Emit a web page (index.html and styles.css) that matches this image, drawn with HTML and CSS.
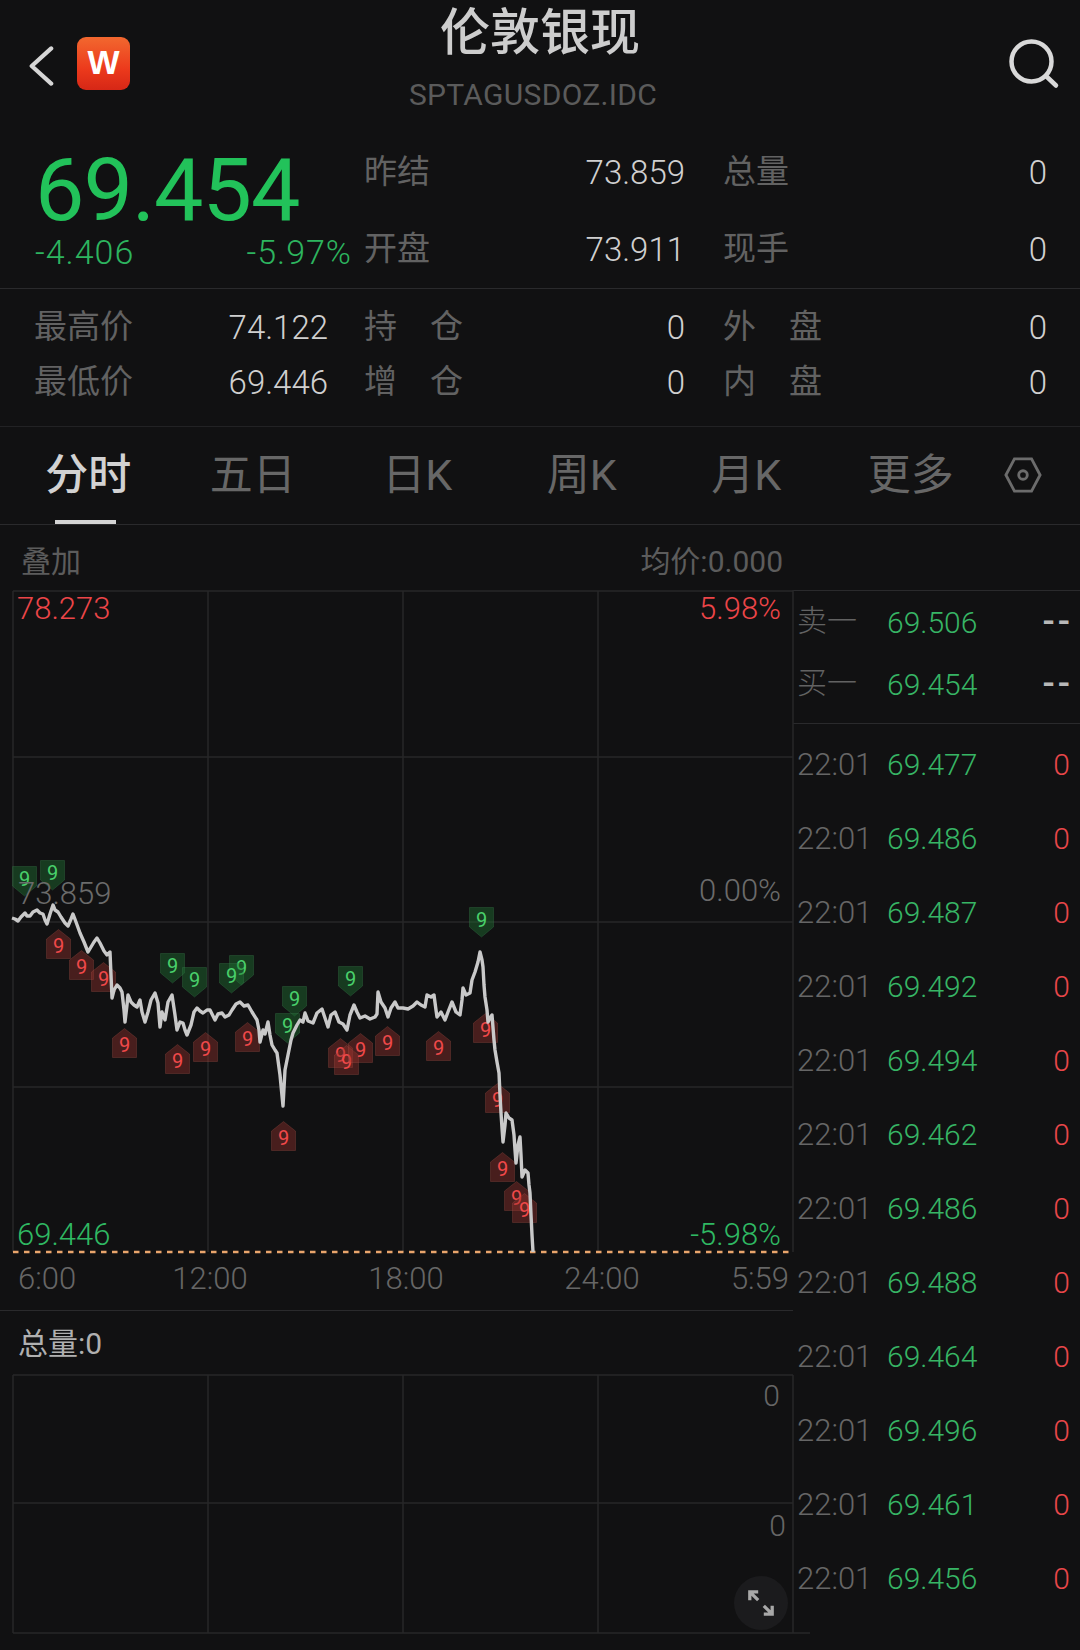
FILE: index.html
```html
<!DOCTYPE html>
<html lang="zh-CN">
<head>
<meta charset="utf-8">
<title>伦敦银现</title>
<link rel="stylesheet" href="styles.css">
</head>
<body>
<div class="page">
  <header class="topbar">
    <div class="topbar-left">
      <svg class="back" viewBox="0 0 28 44"><path d="M25 3L4 22L25 41"/></svg>
      <div class="logo">W</div>
    </div>
    <div class="title-block">
      <div class="title">伦敦银现</div>
      <div class="code">SPTAGUSDOZ.IDC</div>
    </div>
    <svg class="search" viewBox="0 0 52 52"><circle cx="23.5" cy="23.5" r="20"/><path d="M38 38L48 47.5"/></svg>
  </header>

  <section class="quote-top">
    <div class="price-block">
      <div class="price">69.454</div>
      <div class="change"><span>-4.406</span><span>-5.97%</span></div>
    </div>
    <div class="stats stats-top">
      <div class="stat"><span class="lbl">昨结</span><span class="val">73.859</span></div>
      <div class="stat stat-r"><span class="lbl">总量</span><span class="val">0</span></div>
      <div class="stat"><span class="lbl">开盘</span><span class="val">73.911</span></div>
      <div class="stat stat-r"><span class="lbl">现手</span><span class="val">0</span></div>
    </div>
  </section>

  <section class="quote-low">
    <div class="stat stat-l"><span class="lbl">最高价</span><span class="val">74.122</span></div>
    <div class="stat"><span class="lbl">持　仓</span><span class="val">0</span></div>
    <div class="stat stat-r"><span class="lbl">外　盘</span><span class="val">0</span></div>
    <div class="stat stat-l"><span class="lbl">最低价</span><span class="val">69.446</span></div>
    <div class="stat"><span class="lbl">增　仓</span><span class="val">0</span></div>
    <div class="stat stat-r"><span class="lbl">内　盘</span><span class="val">0</span></div>
  </section>

  <nav class="tabs">
    <div class="tab tab-on">分时</div>
    <div class="tab">五日</div>
    <div class="tab">日K</div>
    <div class="tab">周K</div>
    <div class="tab">月K</div>
    <div class="tab">更多</div>
    <svg class="hex" viewBox="0 0 40 40"><path d="M11 3H29L38 20L29 37H11L2 20Z"/><circle cx="20" cy="20" r="4.5"/></svg>
  </nav>

  <div class="chart-head"><span>叠加</span><span>均价:0.000</span></div>

  <div class="board">
    <div class="charts">
      <div class="main-chart">
        <svg class="plot" viewBox="0 590 793 664">
          <defs>
            <path id="mk-down" d="M0.5 0.5H24.5V20L12.5 30L0.5 20Z"/>
            <path id="mk-up" d="M12.5 0.5L24.5 10V29.5H0.5V10Z"/>
          </defs>
          <g class="grid">
            <path d="M13 591H793M13 757H793M13 922H793M13 1087H793"/>
            <path d="M13 591V1252M208 591V1252M403 591V1252M598 591V1252M793 590V1252"/>
          </g>
          <path class="base" d="M13 1252H793"/>

          <g class="mk mk-g">
            <g transform="translate(12,866)"><use href="#mk-down"/><text x="12.5" y="20">9</text></g>
            <g transform="translate(40,860)"><use href="#mk-down"/><text x="12.5" y="20">9</text></g>
            <g transform="translate(160,953)"><use href="#mk-down"/><text x="12.5" y="20">9</text></g>
            <g transform="translate(182,967)"><use href="#mk-down"/><text x="12.5" y="20">9</text></g>
            <g transform="translate(229,955)"><use href="#mk-down"/><text x="12.5" y="20">9</text></g>
            <g transform="translate(219,963)"><use href="#mk-down"/><text x="12.5" y="20">9</text></g>
            <g transform="translate(282,986)"><use href="#mk-down"/><text x="12.5" y="20">9</text></g>
            <g transform="translate(275,1013)"><use href="#mk-down"/><text x="12.5" y="20">9</text></g>
            <g transform="translate(338,966)"><use href="#mk-down"/><text x="12.5" y="20">9</text></g>
            <g transform="translate(469,907)"><use href="#mk-down"/><text x="12.5" y="20">9</text></g>
          </g>
          <g class="mk mk-r">
            <g transform="translate(46,929)"><use href="#mk-up"/><text x="12.5" y="24">9</text></g>
            <g transform="translate(69,950)"><use href="#mk-up"/><text x="12.5" y="24">9</text></g>
            <g transform="translate(91,962)"><use href="#mk-up"/><text x="12.5" y="24">9</text></g>
            <g transform="translate(112,1028)"><use href="#mk-up"/><text x="12.5" y="24">9</text></g>
            <g transform="translate(165,1044)"><use href="#mk-up"/><text x="12.5" y="24">9</text></g>
            <g transform="translate(193,1032)"><use href="#mk-up"/><text x="12.5" y="24">9</text></g>
            <g transform="translate(235,1022)"><use href="#mk-up"/><text x="12.5" y="24">9</text></g>
            <g transform="translate(271,1121)"><use href="#mk-up"/><text x="12.5" y="24">9</text></g>
            <g transform="translate(328,1038)"><use href="#mk-up"/><text x="12.5" y="24">9</text></g>
            <g transform="translate(334,1045)"><use href="#mk-up"/><text x="12.5" y="24">9</text></g>
            <g transform="translate(348,1033)"><use href="#mk-up"/><text x="12.5" y="24">9</text></g>
            <g transform="translate(375,1026)"><use href="#mk-up"/><text x="12.5" y="24">9</text></g>
            <g transform="translate(426,1031)"><use href="#mk-up"/><text x="12.5" y="24">9</text></g>
            <g transform="translate(473,1013)"><use href="#mk-up"/><text x="12.5" y="24">9</text></g>
            <g transform="translate(485,1083)"><use href="#mk-up"/><text x="12.5" y="24">9</text></g>
            <g transform="translate(490,1152)"><use href="#mk-up"/><text x="12.5" y="24">9</text></g>
            <g transform="translate(504,1181)"><use href="#mk-up"/><text x="12.5" y="24">9</text></g>
            <g transform="translate(512,1193)"><use href="#mk-up"/><text x="12.5" y="24">9</text></g>
          </g>

          <polyline class="line" points="12,918 15,919 18,921 21,917 25,913 27,916 30,916 33,912 37,910 40,913 43,914 45,920 47,924 50,914 53,905 55,910 58,912 61,917 65,923 68,926 71,919 73,914 76,922 80,933 84,942 88,952 91,947 94,942 97,938 100,943 104,951 107,955 110,952 111,975 112,998 114,990 117,985 120,988 122,992 124,1010 125,1022 127,1005 128,995 131,1002 134,1005 137,1007 140,1000 142,1012 145,1022 148,1012 151,1000 155,993 158,1003 160,1027 162,1012 165,1020 168,1002 172,995 175,1015 177,1030 180,1022 183,1023 185,1030 187,1035 191,1025 194,1012 197,1008 200,1011 203,1013 207,1010 210,1010 213,1016 215,1020 218,1014 222,1013 225,1017 229,1015 232,1010 236,1004 240,1002 244,1006 248,1005 252,1012 257,1020 259,1030 260,1042 263,1030 265,1034 268,1022 270,1035 272,1045 275,1050 277,1053 280,1075 283,1106 285,1070 288,1055 291,1040 293,1033 297,1025 300,1020 303,1022 305,1013 308,1021 313,1023 317,1013 322,1009 325,1018 328,1027 331,1015 335,1012 339,1022 343,1024 347,1030 350,1015 354,1005 357,1012 360,1018 365,1016 370,1019 375,1017 377,1014 378,992 381,1002 385,1008 388,1017 391,1008 395,1002 398,1008 403,1008 408,1009 413,1006 417,1002 421,1005 425,1007 427,995 431,997 434,995 436,1010 437,1017 441,1012 445,1020 448,1012 452,1002 456,1012 460,1015 462,1000 463,988 466,995 470,993 472,980 475,972 478,962 480,952 482,960 483,967 484,985 485,997 487,1010 488,1022 490,1018 492,1015 494,1040 495,1050 497,1062 499,1073 500,1095 501,1113 502,1128 503,1142 505,1125 506,1113 509,1118 512,1120 514,1135 515,1150 516,1163 518,1145 520,1137 521,1155 522,1177 525,1170 528,1173 529,1185 530,1193 531,1215 532,1235 533,1252"/>
        </svg>
        <span class="ax ax-tl red">78.273</span>
        <span class="ax ax-tr red">5.98%</span>
        <span class="ax ax-ml grey">73.859</span>
        <span class="ax ax-mr grey">0.00%</span>
        <span class="ax ax-bl green">69.446</span>
        <span class="ax ax-br green">-5.98%</span>
      </div>
      <div class="time-axis">
        <span>6:00</span><span>12:00</span><span>18:00</span><span>24:00</span><span>5:59</span>
      </div>
      <div class="vol-head">总量:0</div>
      <div class="vol-chart">
        <svg class="plot" viewBox="0 1374 793 260">
          <g class="grid">
            <path d="M13 1375H793M13 1503H793M13 1633H810"/>
            <path d="M13 1375V1633M208 1375V1633M403 1375V1633M598 1375V1633M793 1375V1633"/>
          </g>
        </svg>
        <span class="vol-num vol-num-a">0</span>
        <span class="vol-num vol-num-b">0</span>
        <div class="expand">
          <svg viewBox="0 0 30 30"><path d="M3 3L12 12M3 12V3H12M27 27L18 18M27 18V27H18"/></svg>
        </div>
      </div>
    </div>

    <aside class="ticks">
      <div class="book">
        <div class="row book-row"><span class="t">卖一</span><span class="p">69.506</span><span class="q dash">--</span></div>
        <div class="row book-row"><span class="t">买一</span><span class="p">69.454</span><span class="q dash">--</span></div>
      </div>
      <div class="row"><span class="t">22:01</span><span class="p">69.477</span><span class="q">0</span></div>
      <div class="row"><span class="t">22:01</span><span class="p">69.486</span><span class="q">0</span></div>
      <div class="row"><span class="t">22:01</span><span class="p">69.487</span><span class="q">0</span></div>
      <div class="row"><span class="t">22:01</span><span class="p">69.492</span><span class="q">0</span></div>
      <div class="row"><span class="t">22:01</span><span class="p">69.494</span><span class="q">0</span></div>
      <div class="row"><span class="t">22:01</span><span class="p">69.462</span><span class="q">0</span></div>
      <div class="row"><span class="t">22:01</span><span class="p">69.486</span><span class="q">0</span></div>
      <div class="row"><span class="t">22:01</span><span class="p">69.488</span><span class="q">0</span></div>
      <div class="row"><span class="t">22:01</span><span class="p">69.464</span><span class="q">0</span></div>
      <div class="row"><span class="t">22:01</span><span class="p">69.496</span><span class="q">0</span></div>
      <div class="row"><span class="t">22:01</span><span class="p">69.461</span><span class="q">0</span></div>
      <div class="row"><span class="t">22:01</span><span class="p">69.456</span><span class="q">0</span></div>
    </aside>
  </div>
</div>
</body>
</html>
```
FILE: styles.css
```css
* { box-sizing: border-box; }
html, body { margin: 0; padding: 0; background: #111112; }
body { font-family: Roboto, "Noto Sans CJK SC", sans-serif; }
.page { width: 1080px; height: 1650px; overflow: hidden; background: #111112; color: #cfcfcf; }

.topbar { height: 130px; display: grid; grid-template-columns: 300px 480px 300px; align-items: start; }
.topbar-left { display: flex; align-items: flex-start; padding: 37px 0 0 28px; gap: 23px; }
.back { width: 26px; height: 44px; margin-top: 7px; fill: none; stroke: #d6d6d6; stroke-width: 4.5; stroke-linecap: round; stroke-linejoin: round; }
.logo { width: 53px; height: 53px; border-radius: 9px; background: linear-gradient(180deg, #f2682f 0%, #ec3a1c 60%, #d62716 100%); color: #fff; font: bold 34px/50px "Liberation Sans", sans-serif; text-align: center; }
.title-block { text-align: center; }
.title { font-size: 50px; line-height: 60px; font-weight: 500; color: #cdcdcd; margin-top: 3px; }
.code { font-size: 30px; line-height: 36px; color: #5b5b5b; margin-top: 14px; padding-right: 14px; letter-spacing: 0.3px; }
.search { width: 52px; height: 52px; margin: 38px 0 0 228px; fill: none; stroke: #d9d9d9; stroke-width: 4.5; stroke-linecap: round; }

.quote-top { height: 159px; display: grid; grid-template-columns: 316px 1fr; padding: 0 33px 0 35px; border-bottom: 1px solid #2a2a2c; }
.price-block { display: flex; flex-direction: column; }
.price { font-size: 88px; line-height: 90px; font-weight: 450; color: #22c25a; letter-spacing: -1px; margin-top: 15px; }
.change { display: flex; justify-content: space-between; font-size: 34px; line-height: 36px; font-weight: 300; letter-spacing: 1px; color: #2db45f; margin-top: -1px; margin-right: -1px; }
.stats { display: grid; grid-template-columns: 334px 362px; }
.stats-top { grid-auto-rows: 77px; padding-top: 4px; }
.stat { display: flex; justify-content: space-between; align-items: center; padding-left: 13px; }
.stat-r { padding-left: 38px; }
.lbl { font-size: 33px; line-height: 40px; color: #626262; margin-bottom: 1px; }
.val { font-size: 33px; font-weight: 300; color: #d0d0d0; }

.quote-low { height: 138px; display: grid; grid-template-columns: 316px 334px 362px; grid-auto-rows: 55px; padding: 11px 33px 0 35px; border-bottom: 1px solid #222224; }
.stat-l { padding: 0 23px 0 0; margin-left: -1px; }

.tabs { height: 98px; display: flex; align-items: flex-start; padding: 0 0 0 6px; border-bottom: 1px solid #2a2a2c; }
.tab { width: 164.5px; text-align: center; font-size: 43px; line-height: 50px; margin-top: 23px; color: #676767; position: relative; height: 74px; }
.tab-on { color: #d2d2d2; font-weight: 500; }
.tab-on::after { content: ""; position: absolute; left: 49px; bottom: 0; width: 61px; height: 4px; background: #d4d4d4; }
.hex { width: 38px; height: 38px; margin: 29px 0 0 11px; flex: none; fill: none; stroke: #6c6c6c; stroke-width: 3; }

.chart-head { height: 65px; display: flex; justify-content: space-between; align-items: center; padding: 2px 297px 0 21px; font-size: 30px; color: #5c5c5c; }

.board { display: flex; }
.charts { width: 793px; flex: none; }
.main-chart { position: relative; height: 664px; }
.plot { display: block; width: 100%; height: 100%; overflow: visible; }
.grid path { fill: none; stroke: #272729; stroke-width: 1.5; }
.base { fill: none; stroke: #e9a56c; stroke-width: 2.5; stroke-dasharray: 5.5 5.5; }
.line { fill: none; stroke: #c9c9c9; stroke-width: 3.4; stroke-linejoin: round; }
.mk text { font-size: 20px; font-family: Roboto, sans-serif; text-anchor: middle; }
.mk-g use { fill: rgba(30, 110, 50, 0.45); stroke: rgba(60, 130, 80, 0.3); stroke-width: 1; }
.mk-g text { fill: #49d06b; }
.mk-r use { fill: rgba(150, 50, 45, 0.42); stroke: rgba(180, 90, 80, 0.25); stroke-width: 1; }
.mk-r text { fill: #f0494a; }

.ax { position: absolute; font-size: 31px; line-height: 36px; font-weight: 300; }
.red { color: #ec4548; }
.grey { color: #6b6b6b; }
.green { color: #2fb862; }
.ax-tl { left: 17px; top: 1px; }
.ax-tr { right: 12px; top: 1px; }
.ax-ml { left: 18px; top: 286px; }
.ax-mr { right: 12px; top: 283px; }
.ax-bl { left: 17px; top: 627px; }
.ax-br { right: 12px; top: 627px; }

.time-axis { height: 57px; display: grid; grid-template-columns: 94px 196px 196px 196px 89px; padding: 0 0 8px 18px; align-items: center; font-size: 31px; font-weight: 300; color: #666; border-bottom: 1px solid #2a2a2c; }
.time-axis span { text-align: center; }
.time-axis span:first-child { text-align: left; }
.time-axis span:last-child { text-align: right; }
.vol-head { height: 63px; padding: 16px 0 0 18px; font-size: 30px; line-height: 34px; color: #b0b0b0; }
.vol-chart { position: relative; height: 260px; width: 793px; }
.vol-num { position: absolute; font-size: 30px; line-height: 36px; font-weight: 300; color: #666; }
.vol-num-a { right: 13px; top: 4px; }
.vol-num-b { right: 7px; top: 134px; }
.expand { position: absolute; left: 734px; top: 202px; width: 54px; height: 54px; border-radius: 50%; background: #1b1b1d; display: flex; align-items: center; justify-content: center; }
.expand svg { width: 28px; height: 28px; fill: none; stroke: #a8a8a8; stroke-width: 3.5; }

.ticks { width: 287px; flex: none; }
.book { height: 134px; border-top: 1.5px solid #2a2a2c; border-bottom: 1.5px solid #2a2a2c; margin-bottom: 3px; }
.row { height: 74px; display: flex; align-items: center; padding: 0 10px 0 4px; font-size: 30px; }
.book-row { height: 62px; }
.book-row .t { font-size: 30px; line-height: 36px; margin-bottom: 2px; color: #626262; }
.t { width: 90px; font-size: 31px; font-weight: 300; color: #666; flex: none; }
.p { color: #37b565; flex: 1; font-weight: 350; }
.q { color: #e8474a; font-weight: 300; }
.q.dash { color: #b8b8b8; font-size: 36px; font-weight: 500; letter-spacing: 3px; margin-right: -3px; }
```
